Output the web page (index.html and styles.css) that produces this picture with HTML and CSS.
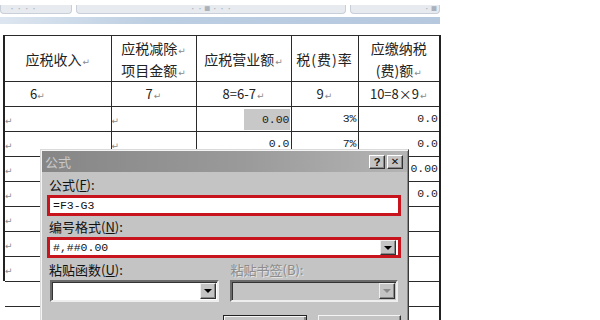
FILE: index.html
```html
<!DOCTYPE html>
<html lang="zh-CN">
<head>
<meta charset="utf-8">
<title>公式</title>
<link rel="stylesheet" href="styles.css">
</head>
<body>
<div class="ribbon">
  <div class="tabs">
    <div class="tab t1">· · · ·</div>
    <div class="tab t2">· · ■ · · ·</div>
    <div class="tab t3">· ■</div>
  </div>
  <div class="band"></div>
</div>

<table class="tax">
  <colgroup>
    <col class="w1"><col class="w2"><col class="w3"><col class="w4"><col class="w5">
  </colgroup>
  <tr class="head">
    <td>应税收入<i>↵</i></td>
    <td>应税减除<i>↵</i><br>项目金额<i>↵</i></td>
    <td>应税营业额<i>↵</i></td>
    <td class="clip"><span>税(费)率</span></td>
    <td>应缴纳税<br>(费)额<i>↵</i></td>
  </tr>
  <tr class="nums">
    <td class="left ind">6<i>↵</i></td>
    <td>7<i>↵</i></td>
    <td>8=6-7<i>↵</i></td>
    <td>9<i>↵</i></td>
    <td>10=8×9<i>↵</i></td>
  </tr>
  <tr>
    <td class="left"><i>↵</i></td>
    <td class="left"><i>↵</i></td>
    <td class="num"><span class="field">0.00</span></td>
    <td class="num">3%</td>
    <td class="num">0.0</td>
  </tr>
  <tr>
    <td class="left"><i>↵</i></td>
    <td class="left"><i>↵</i></td>
    <td class="num">0.0</td>
    <td class="num">7%</td>
    <td class="num">0.0</td>
  </tr>
  <tr>
    <td class="left"><i>↵</i></td>
    <td></td><td></td><td></td>
    <td class="num">0.00</td>
  </tr>
  <tr>
    <td class="left"><i>↵</i></td>
    <td></td><td></td><td></td>
    <td class="num">0.0</td>
  </tr>
  <tr>
    <td class="left"><i>↵</i></td>
    <td></td><td></td><td></td><td></td>
  </tr>
  <tr>
    <td class="left"><i>↵</i></td>
    <td></td><td></td><td></td><td></td>
  </tr>
  <tr>
    <td class="left"><i>↵</i></td>
    <td></td><td></td><td></td><td></td>
  </tr>
  <tr class="open">
    <td></td><td></td><td></td><td></td><td></td>
  </tr>
  <tr class="open">
    <td></td><td></td><td></td><td></td><td></td>
  </tr>
</table>

<div class="dialog">
  <div class="titlebar">
    <span class="title">公式</span>
    <div class="tbtns">
      <span class="tbtn">?</span>
      <span class="tbtn x">✕</span>
    </div>
  </div>
  <div class="body">
    <div class="label">公式(<u>F</u>):</div>
    <div class="redbox"><span class="val">=F3-G3</span></div>
    <div class="label">编号格式(<u>N</u>):</div>
    <div class="redbox"><span class="val">#,##0.00</span><span class="drop small"><b class="tri"></b></span></div>
    <div class="row2">
      <div class="label">粘贴函数(<u>U</u>):</div>
      <div class="label dis">粘贴书签(B):</div>
    </div>
    <div class="row2">
      <div class="combo"><span class="drop"><b class="tri"></b></span></div>
      <div class="combo off"><span class="drop"><b class="tri grey"></b></span></div>
    </div>
    <div class="buttons">
      <span class="btn def"></span>
      <span class="btn"></span>
    </div>
  </div>
</div>
</body>
</html>
```

FILE: styles.css
```css
* { box-sizing: border-box; }
html, body { margin: 0; background: #fff; }
body {
  width: 600px;
  height: 320px;
  overflow: hidden;
  position: relative;
  font-family: "Noto Sans CJK SC", "Noto Sans", sans-serif;
  color: #222;
}

/* ribbon strip at the top */
.ribbon { width: 440px; padding-top: 5px; }
.tabs { display: flex; gap: 4px; height: 9px; }
.tab {
  background: #e7eaee;
  border: 1px solid #c8cfd8;
  border-top: none;
  border-radius: 0 0 4px 4px;
  font-size: 6px;
  line-height: 7px;
  color: #aab1ba;
  overflow: hidden;
  white-space: nowrap;
}
.t1 { width: 72px; padding-left: 8px; }
.t2 { width: 270px; text-align: center; }
.t3 { flex: 1; text-align: right; padding-right: 2px; }
.band {
  height: 7px;
  margin-top: 3px;
  background: linear-gradient(to right, #dde6f0, #bccee2 35%, #b5c8de);
}

/* table */
.tax {
  margin: 11px 0 0 3px;
  border-collapse: collapse;
  table-layout: fixed;
  width: 436px;
  font-size: 13px;
  border-left: 2px solid #222;
  border-right: 2px solid #222;
}
.w1 { width: 107px; }
.w2 { width: 85px; }
.w3 { width: 95px; }
.w4 { width: 67px; }
.w5 { width: 82px; }
.tax td {
  border: 1px solid #2a2a2a;
  padding: 0;
  height: 25px;
  text-align: center;
  vertical-align: middle;
  white-space: nowrap;
  overflow: hidden;
  line-height: 14px;
}
.tax .head td { height: 46px; line-height: 22px; font-size: 14px; }
.tax i {
  font-style: normal;
  font-family: "DejaVu Sans", sans-serif;
  font-size: 9px;
  line-height: 1;
  color: #8a8a8a;
  margin-left: 1px;
}
.tax .clip span { display: block; margin: 0 -3px; text-align: center; font-size: 14px; letter-spacing: 1px; }
.tax td.left { text-align: left; }
.tax td.left i { margin-left: 0; }
.tax td.ind { padding-left: 25px; }
.tax td.num {
  text-align: right;
  padding-right: 1px;
  font-family: "Liberation Mono", monospace;
  font-size: 11.5px;
}
.field {
  display: inline-block;
  vertical-align: middle;
  background: #c8c8c8;
  padding-left: 18px;
  line-height: 21px;
}
.tax tr.open td:first-child { border-left: 2px solid #fff; }

/* dialog */
.dialog {
  position: absolute;
  left: 40px;
  top: 149px;
  width: 369px;
  height: 200px;
  background: #c4c4c4;
  border: 1px solid;
  border-color: #dadada #383838 #383838 #dadada;
  box-shadow: inset 1px 1px 0 #f4f4f4, inset -1px -1px 0 #8a8a8a;
  padding: 1px;
}
.titlebar {
  height: 21px;
  background: linear-gradient(to right, #868686, #9a9a9a 55%, #b4b4b4);
  display: flex;
  align-items: center;
  justify-content: space-between;
  padding: 0 4px 0 3px;
}
.title { color: #cacaca; font-size: 13px; line-height: 21px; }
.tbtns { display: flex; gap: 2px; }
.tbtn {
  width: 16px;
  height: 14px;
  background: #c4c4c4;
  border: 1px solid;
  border-color: #fff #333 #333 #fff;
  box-shadow: inset -1px -1px 0 #888;
  font-family: "Liberation Sans", sans-serif;
  font-weight: bold;
  font-size: 11px;
  line-height: 12px;
  text-align: center;
  color: #111;
}
.tbtn.x { font-family: "DejaVu Sans", sans-serif; font-size: 10px; }
.body { padding: 3px 6px 0 5px; }
.label {
  height: 20px;
  line-height: 20px;
  font-size: 13px;
  padding-left: 2px;
  color: #111;
}
.label u { text-decoration: underline; }
.label.dis { color: #8c8c8c; text-shadow: 1px 1px 0 #e2e2e2; }
.redbox {
  height: 21px;
  border: 3px solid #c8151d;
  background: #fff;
  display: flex;
  align-items: center;
  justify-content: space-between;
  padding: 0 2px 0 3px;
  margin-bottom: 1px;
}
.val { font-family: "Liberation Mono", monospace; font-size: 11.5px; color: #111; }
.row2 { display: flex; gap: 11px; }
.row2 .label { width: 182px; height: 21px; line-height: 21px; }
.row2 .label.dis { padding-left: 1px; }
.combo {
  margin-left: 3px;
  width: 169px;
  height: 22px;
  background: #fff;
  border: 2px solid;
  border-color: #6a6a6a #eee #eee #6a6a6a;
  box-shadow: inset 1px 1px 0 #333;
  display: flex;
  justify-content: flex-end;
  align-items: center;
  padding-right: 1px;
}
.combo.off { margin-left: 0; width: 168px; background: #c4c4c4; }
.drop {
  width: 16px;
  height: 16px;
  background: #c4c4c4;
  border: 1px solid;
  border-color: #eee #333 #333 #eee;
  box-shadow: inset -1px -1px 0 #888;
  display: flex;
  align-items: center;
  justify-content: center;
}
.drop.small { height: 15px; }
.tri {
  width: 0;
  height: 0;
  border-left: 4px solid transparent;
  border-right: 4px solid transparent;
  border-top: 4px solid #000;
}
.tri.grey { border-top-color: #8a8a8a; }
.buttons { display: flex; gap: 11px; margin: 13px 0 0 176px; }
.btn {
  width: 84px;
  height: 24px;
  background: #c4c4c4;
  border: 1px solid;
  border-color: #f4f4f4 #333 #333 #f4f4f4;
  box-shadow: inset -1px -1px 0 #888;
}
.btn.def { border-color: #222; box-shadow: inset 1px 1px 0 #f4f4f4, inset -2px -2px 0 #888; }
```
